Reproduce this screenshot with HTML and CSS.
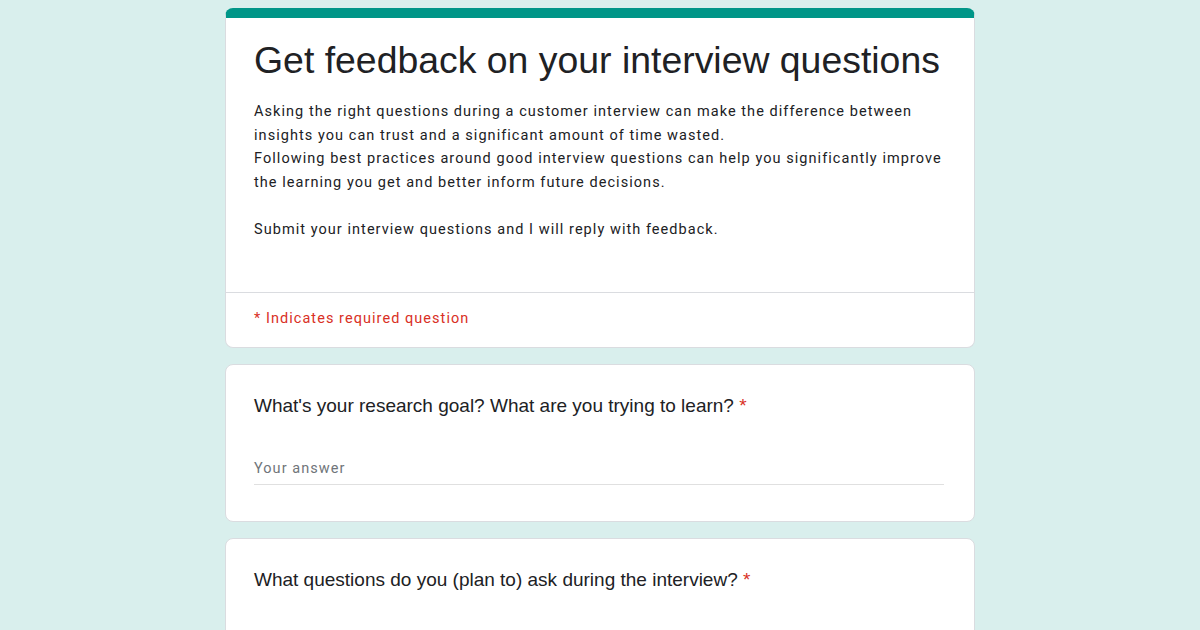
FILE: index.html
```html
<!DOCTYPE html>
<html>
<head>
<meta charset="utf-8">
<link rel="stylesheet" href="styles.css">
</head>
<body>
<div class="form">
  <div class="card header">
    <div class="header-main">
      <h1 class="title">Get feedback on your interview questions</h1>
      <div class="desc">
        <p>Asking the right questions during a customer interview can make the difference between insights you can trust and a significant amount of time wasted.<br>Following best practices around good interview questions can help you significantly improve the learning you get and better inform future decisions.</p>
        <p>Submit your interview questions and I will reply with feedback.</p>
      </div>
    </div>
    <div class="required-note">* Indicates required question</div>
  </div>
  <div class="card question">
    <div class="q-title">What's your research goal? What are you trying to learn? <span class="star">*</span></div>
    <div class="answer">Your answer</div>
  </div>
  <div class="card question last">
    <div class="q-title">What questions do you (plan to) ask during the interview? <span class="star">*</span></div>
  </div>
</div>
</body>
</html>
```

FILE: styles.css
```css
html, body {
  margin: 0;
  padding: 0;
}
body {
  background: #d9efed;
  height: 630px;
  overflow: hidden;
}
.form {
  width: 750px;
  margin: 8px auto 0;
  display: flex;
  flex-direction: column;
  gap: 16px;
}
.card {
  background: #fff;
  border: 1px solid #dadce0;
  border-radius: 8px;
  box-sizing: border-box;
}
.header {
  border-top: 10px solid #009688;
}
.header-main {
  padding: 14px 28px 50px 28px;
  border-bottom: 1px solid #dadce0;
}
.title {
  margin: 0;
  font-family: "Liberation Sans", Arial, sans-serif;
  font-weight: 400;
  font-size: 37.4px;
  line-height: 56px;
  color: #202124;
}
.desc {
  margin-top: 12px;
  font-family: Roboto, "Noto Sans", sans-serif;
  font-size: 14.5px;
  line-height: 23.6px;
  color: #202124;
  letter-spacing: 1.05px;
}
.desc p {
  margin: 0 0 23.6px 0;
}
.desc p:last-child {
  margin-bottom: 0;
}
.required-note {
  padding: 15px 28px 17px;
  font-family: Roboto, "Noto Sans", sans-serif;
  font-size: 14.5px;
  line-height: 22px;
  color: #d93025;
  letter-spacing: 1.05px;
}
.question {
  padding: 27px 28px 36px;
}
.last {
  min-height: 157px;
}
.q-title {
  font-family: "Liberation Sans", Arial, sans-serif;
  font-size: 19px;
  line-height: 28px;
  color: #202124;
}
.star {
  color: #d93025;
}
.answer {
  margin-top: 38px;
  width: 690px;
  font-family: Roboto, "Noto Sans", sans-serif;
  font-size: 14.5px;
  line-height: 22px;
  color: #70757a;
  padding-bottom: 4px;
  border-bottom: 1px solid #e0e0e0;
  letter-spacing: 1.05px;
}
```
